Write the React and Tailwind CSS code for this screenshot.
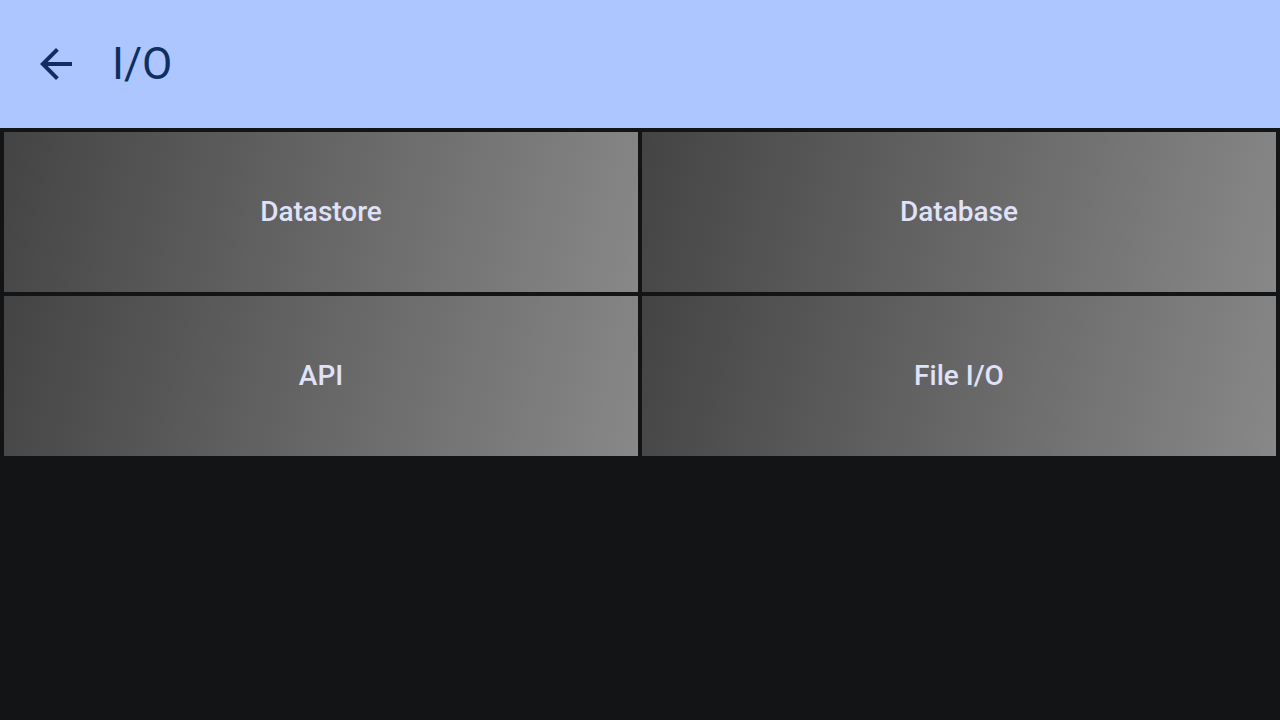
const items = ["Datastore", "Database", "API", "File I/O"];

export default function App() {
  return (
    <div className="min-h-screen bg-[#121416] font-['Roboto',sans-serif]">
      <header className="flex h-32 items-center bg-[#adc6ff] px-8 text-[#102f60]">
        <button type="button" aria-label="Back" className="flex size-12 items-center justify-center">
          <svg viewBox="0 0 24 24" className="size-12" fill="currentColor" aria-hidden="true">
            <path d="M20 11H7.83l5.59-5.59L12 4l-8 8 8 8 1.41-1.41L7.83 13H20v-2z" />
          </svg>
        </button>
        <h1 className="ml-8 text-[44px] leading-14 font-normal">I/O</h1>
      </header>
      <main className="grid grid-cols-2 gap-1 p-1">
        {items.map((item) => (
          <button
            key={item}
            type="button"
            className="flex h-40 items-center justify-center bg-[linear-gradient(104deg,#444444,#888888)] text-[28px] leading-10 font-medium text-[#e0e2f9]"
          >
            {item}
          </button>
        ))}
      </main>
    </div>
  );
}
